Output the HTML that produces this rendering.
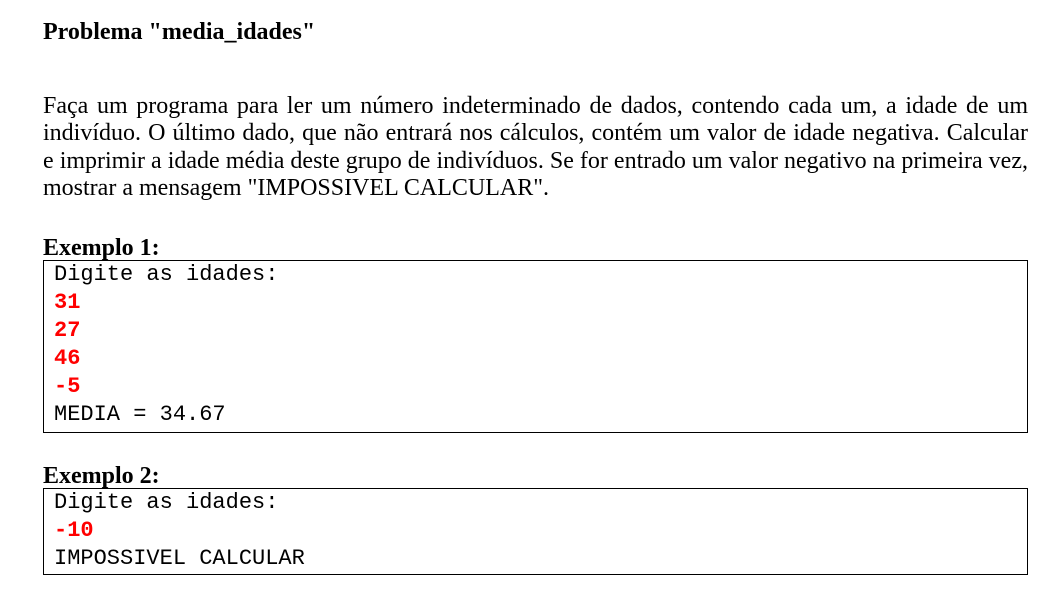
<!DOCTYPE html>
<html><head><meta charset="utf-8"><style>
body{margin:0;background:#fff;width:1062px;height:592px;overflow:hidden;position:relative;font-family:"Liberation Serif",serif;color:#000}
.t{position:absolute;left:43px;font-weight:bold;font-size:24px;line-height:26px}
.p{position:absolute;left:43px;top:93px;width:985px;margin:0;font-size:24px;line-height:27.3px}
.p span{display:block;white-space:nowrap;text-align:justify;text-align-last:justify}
.p span.l{text-align-last:left}
.box{position:absolute;left:43px;width:985px;border:1.5px solid #000;font-family:"Liberation Mono",monospace;font-size:22px;line-height:28px;padding-left:10px;box-sizing:border-box}
.r{color:#f00;font-weight:bold}
</style></head><body>
<div class="t" style="top:19px">Problema "media_idades"</div>
<div class="p"><span>Faça um programa para ler um número indeterminado de dados, contendo cada um, a idade de um</span><span>indivíduo. O último dado, que não entrará nos cálculos, contém um valor de idade negativa. Calcular</span><span>e imprimir a idade média deste grupo de indivíduos. Se for entrado um valor negativo na primeira vez,</span><span class="l">mostrar a mensagem "IMPOSSIVEL CALCULAR".</span></div>
<div class="t" style="top:235px">Exemplo 1:</div>
<div class="box" style="top:260px;height:173px">Digite as idades:<br><span class="r">31</span><br><span class="r">27</span><br><span class="r">46</span><br><span class="r">-5</span><br>MEDIA = 34.67</div>
<div class="t" style="top:463px">Exemplo 2:</div>
<div class="box" style="top:488px;height:87px">Digite as idades:<br><span class="r">-10</span><br>IMPOSSIVEL CALCULAR</div>
</body></html>
